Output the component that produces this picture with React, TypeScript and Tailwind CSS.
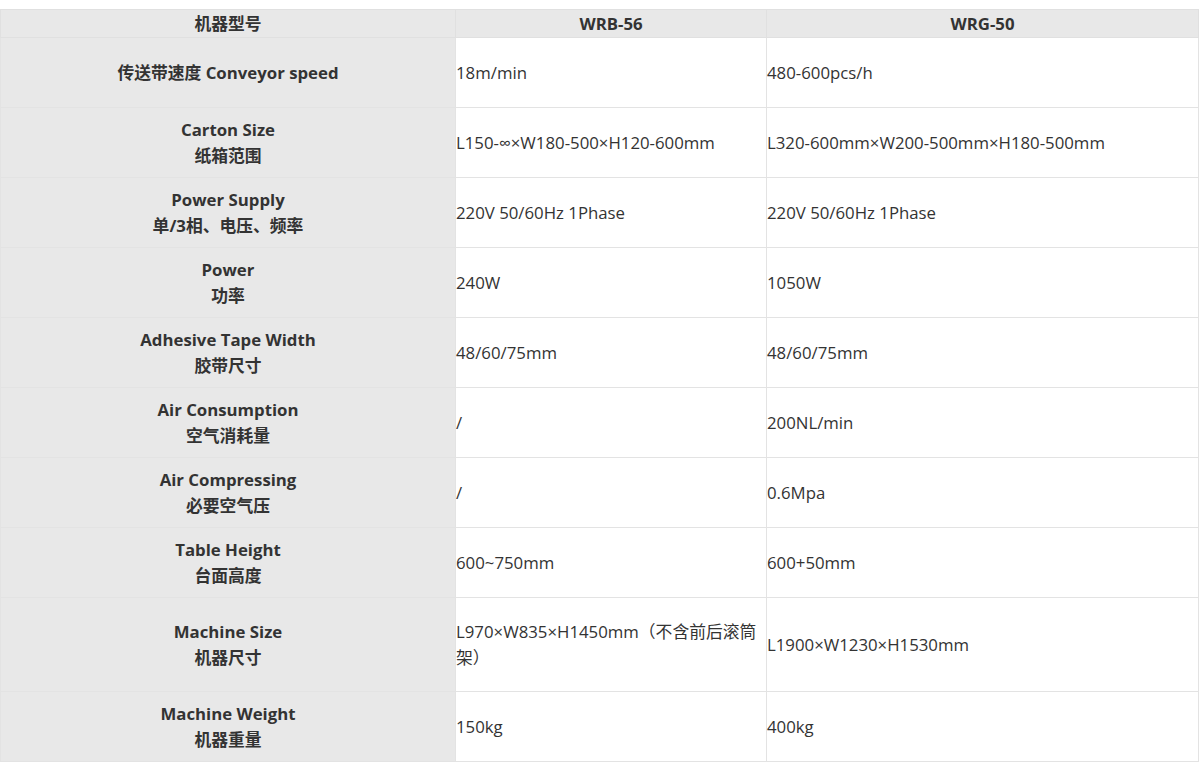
const rows: { en: string; zh: string; a: string; b: string; tall?: boolean }[] = [
  { en: "Carton Size", zh: "纸箱范围", a: "L150-∞×W180-500×H120-600mm", b: "L320-600mm×W200-500mm×H180-500mm" },
  { en: "Power Supply", zh: "单/3相、电压、频率", a: "220V 50/60Hz 1Phase", b: "220V 50/60Hz 1Phase" },
  { en: "Power", zh: "功率", a: "240W", b: "1050W" },
  { en: "Adhesive Tape Width", zh: "胶带尺寸", a: "48/60/75mm", b: "48/60/75mm" },
  { en: "Air Consumption", zh: "空气消耗量", a: "/", b: "200NL/min" },
  { en: "Air Compressing", zh: "必要空气压", a: "/", b: "0.6Mpa" },
  { en: "Table Height", zh: "台面高度", a: "600~750mm", b: "600+50mm" },
  { en: "Machine Size", zh: "机器尺寸", a: "L970×W835×H1450mm（不含前后滚筒架）", b: "L1900×W1230×H1530mm", tall: true },
  { en: "Machine Weight", zh: "机器重量", a: "150kg", b: "400kg" },
];

export default function App() {
  return (
    <div
      className="w-[1200px] h-[763px] bg-white pt-[9px] text-[#333] text-[16.8px] leading-[26px]"
      style={{ fontFamily: '"Open Sans", "Noto Sans CJK SC", sans-serif' }}
    >
      <table className="w-[1198px] table-fixed border-collapse">
        <colgroup>
          <col className="w-[455px]" />
          <col className="w-[311px]" />
          <col className="w-[432px]" />
        </colgroup>
        <thead>
          <tr className="h-[28px] bg-[#e8e8e8] font-bold">
            <th className="border border-[#e0e0e0] text-center p-0 leading-[26px]">机器型号</th>
            <th className="border border-[#e0e0e0] text-center p-0 leading-[26px]">WRB-56</th>
            <th className="border border-[#e0e0e0] text-center p-0 leading-[26px]">WRG-50</th>
          </tr>
        </thead>
        <tbody>
          <tr className="h-[70px]">
            <td className="border border-[#e3e3e3] bg-[#e8e8e8] text-center font-bold p-0">传送带速度 Conveyor speed</td>
            <td className="border border-[#e3e3e3] p-0 align-middle">18m/min</td>
            <td className="border border-[#e3e3e3] p-0 align-middle">480-600pcs/h</td>
          </tr>
          {rows.map((r) => (
            <tr key={r.en} className={r.tall ? "h-[94px]" : "h-[70px]"}>
              <td className="border border-[#e3e3e3] bg-[#e8e8e8] text-center font-bold p-0">
                {r.en}
                <br />
                {r.zh}
              </td>
              <td className="border border-[#e3e3e3] p-0 align-middle">{r.a}</td>
              <td className="border border-[#e3e3e3] p-0 align-middle">{r.b}</td>
            </tr>
          ))}
        </tbody>
      </table>
    </div>
  );
}
